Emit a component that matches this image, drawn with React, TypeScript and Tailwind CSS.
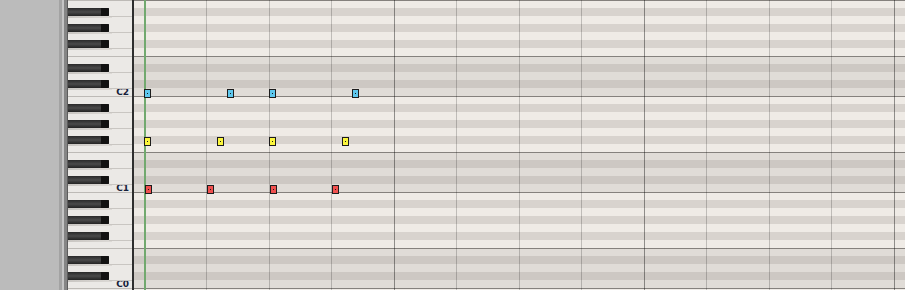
import React from "react";

// piano roll: rows of 8px, top row is B2
const ROWS = 37;
const BLACK = [1, 3, 5, 8, 10];
const names = ["B", "A#", "A", "G#", "G", "F#", "F", "E", "D#", "D", "C#", "C"];

const notes = [
    { x: 144, y: 89, color: "bg-[#5ec8ee]" },
    { x: 227, y: 89, color: "bg-[#5ec8ee]" },
    { x: 269, y: 89, color: "bg-[#5ec8ee]" },
    { x: 352, y: 89, color: "bg-[#5ec8ee]" },
    { x: 144, y: 137, color: "bg-[#fbf63c]" },
    { x: 217, y: 137, color: "bg-[#fbf63c]" },
    { x: 269, y: 137, color: "bg-[#fbf63c]" },
    { x: 342, y: 137, color: "bg-[#fbf63c]" },
    { x: 145, y: 185, color: "bg-[#f0504e]" },
    { x: 207, y: 185, color: "bg-[#f0504e]" },
    { x: 270, y: 185, color: "bg-[#f0504e]" },
    { x: 332, y: 185, color: "bg-[#f0504e]" },
];

const GRID_X = 134;

function KeyRow({ i }: { i: number }) {
    const k = i % 12;
    const octave = 2 - Math.floor(i / 12);
    const isBlack = BLACK.includes(k);
    const lineAbove = k === 7 || k === 0;
    return (
        <div className={`relative h-2 shrink-0 ${lineAbove ? "border-t border-[#bdbab6]" : ""}`}>
            {isBlack && (
                <>
                    <div className="absolute left-0 top-0 z-10 h-[8px] w-[41px] rounded-r-[1px] bg-gradient-to-b from-[#2a2a2a] via-[#4a4a4a] to-[#242424]">
                        <div className="absolute right-0 top-0 h-full w-[8px] rounded-r-[1px] bg-[#121212]" />
                    </div>
                    <div className="absolute left-0 top-[8px] z-10 h-[2px] w-[44px] bg-gradient-to-r from-[#c9c6c2] to-[#dcd9d5]" />
                    <div className="absolute left-[41px] right-0 top-[8px] z-10 h-px bg-[#c9c6c2]" />
                </>
            )}
            {k === 11 && (
                <span className="absolute right-[3px] top-[-1px] font-['DejaVu_Sans',sans-serif] text-[9px] font-bold leading-[10px] text-[#15203a]">
                    C{octave}
                </span>
            )}
        </div>
    );
}

function GridRow({ i }: { i: number }) {
    const k = i % 12;
    const isBlack = BLACK.includes(k);
    const low = k >= 7; // C..E part of the octave
    let bg = "bg-[#efebe6]";
    if (low) bg = isBlack ? "bg-[#cdc8c3]" : "bg-[#e0dcd7]";
    else if (isBlack) bg = "bg-[#d8d3ce]";
    const lineAbove = k === 7 || k === 0;
    return (
        <div
            title={names[k]}
            className={`h-2 shrink-0 ${bg} ${lineAbove ? "border-t border-[#85817d]" : ""}`}
        />
    );
}

export default function App() {
    const rows = Array.from({ length: ROWS }, (_, i) => i);
    const beats = Array.from({ length: 13 }, (_, k) => k);

    return (
        <div className="flex h-[290px] w-[905px] overflow-hidden bg-[#bababa]">
            {/* side panel */}
            <div className="w-[59px] shrink-0 bg-[#bbbbbb]" />
            <div className="flex w-[9px] shrink-0">
                <div className="w-[3px] bg-[#a3a3a3]" />
                <div className="w-[2px] bg-[#c4c4c4]" />
                <div className="w-[3px] bg-[#858585]" />
                <div className="w-px bg-[#5c5c5c]" />
            </div>

            {/* keyboard */}
            <div className="flex w-[64px] shrink-0 flex-col bg-[#ebe9e6]">
                {rows.map((i) => (
                    <KeyRow key={i} i={i} />
                ))}
            </div>
            <div className="w-[2px] shrink-0 bg-[#2e2e2e]" />

            {/* note grid */}
            <div className="relative flex-1 overflow-hidden">
                <div className="flex flex-col">
                    {rows.map((i) => (
                        <GridRow key={i} i={i} />
                    ))}
                </div>

                {beats.map((k) => (
                    <div
                        key={k}
                        className={`absolute top-0 h-full w-px ${k % 4 === 0 ? "bg-black/40" : "bg-black/20"}`}
                        style={{ left: Math.round(143.5 + 62.5 * k) - GRID_X }}
                    />
                ))}

                {/* playhead */}
                <div className="absolute top-0 h-full w-[2px] bg-[#72a96f]" style={{ left: 144 - GRID_X }} />

                {notes.map((n, idx) => (
                    <div
                        key={idx}
                        className={`absolute flex h-[9px] w-[7px] items-center justify-center border border-[#1c1c1c] ${n.color}`}
                        style={{ left: n.x - GRID_X, top: n.y }}
                    >
                        <div className="h-px w-px bg-[#1c1c1c]" />
                    </div>
                ))}
            </div>
        </div>
    );
}
